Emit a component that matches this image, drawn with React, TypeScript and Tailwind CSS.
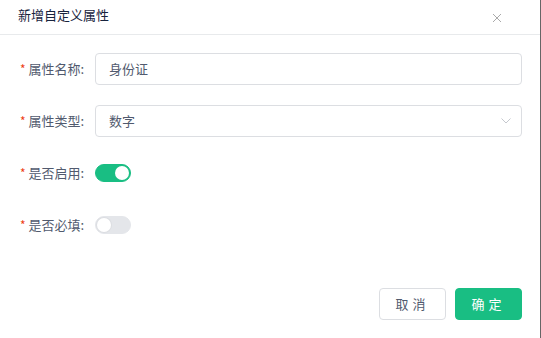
import { useState } from 'react';

const FONT = { fontFamily: '"Noto Sans CJK SC", "Noto Sans", sans-serif' };

const Label = ({ text }: { text: string }) => (
  <label className="flex w-[95px] shrink-0 items-center whitespace-nowrap pl-[20px] text-[13px] text-[#515a6e]">
    <span className="mr-[3px] text-[12px] text-[#ed4014]">*</span>
    {text}
  </label>
);

const Toggle = ({ on, onClick }: { on: boolean; onClick: () => void }) => (
  <button
    onClick={onClick}
    className={`relative h-[18px] w-[36px] rounded-full border ${
      on ? 'border-[#19be83] bg-[#19be83]' : 'border-[#e4e6ea] bg-[#e4e6ea]'
    }`}
  >
    <span
      className={`absolute top-[1px] h-[14px] w-[14px] rounded-full bg-white ${
        on ? 'left-[19px]' : 'left-[1px] shadow-[0_0_0_1px_#dcdee2]'
      }`}
    />
  </button>
);

export default function App() {
  const [enabled, setEnabled] = useState(true);
  const [required, setRequired] = useState(false);

  return (
    <div
      style={FONT}
      className="flex h-[338px] w-[541px] flex-col border-r border-[#666] bg-white"
    >
      <div className="flex h-[35px] items-start justify-between border-b border-[#e8eaec] pl-[18px] pr-[38px] pt-[5px]">
        <span className="text-[13px] leading-[19px] text-[#17233d]">新增自定义属性</span>
        <svg width="10" height="10" viewBox="0 0 10 10" className="mt-[8px]">
          <path d="M1 1L9 9M9 1L1 9" stroke="#aaa" strokeWidth="1" />
        </svg>
      </div>

      <div className="flex flex-col gap-[20px] pr-[18px] pt-[18px]">
        <div className="flex h-[32px]">
          <Label text="属性名称:" />
          <div className="flex flex-1 items-center rounded-[4px] border border-[#dcdee2] px-[13px] text-[13px] text-[#515a6e]">
            身份证
          </div>
        </div>
        <div className="flex h-[32px]">
          <Label text="属性类型:" />
          <div className="flex flex-1 items-center justify-between rounded-[4px] border border-[#dcdee2] pl-[13px] pr-[9px] text-[13px] text-[#515a6e]">
            数字
            <svg width="12" height="8" viewBox="0 0 12 8">
              <path d="M1.5 1.5L6 6L10.5 1.5" fill="none" stroke="#c5c8ce" strokeWidth="1" />
            </svg>
          </div>
        </div>
        <div className="flex h-[32px] items-center">
          <Label text="是否启用:" />
          <Toggle on={enabled} onClick={() => setEnabled(!enabled)} />
        </div>
        <div className="flex h-[32px] items-center">
          <Label text="是否必填:" />
          <Toggle on={required} onClick={() => setRequired(!required)} />
        </div>
      </div>

      <div className="mt-[47px] flex justify-end gap-[9px] pr-[18px]">
        <button className="h-[32px] w-[67px] rounded-[4px] border border-[#dcdee2] bg-white text-[13px] tracking-[4px] text-[#515a6e]">
          取消
        </button>
        <button className="h-[32px] w-[67px] rounded-[4px] border border-[#19be83] bg-[#19be83] text-[13px] tracking-[4px] text-white">
          确定
        </button>
      </div>
    </div>
  );
}
